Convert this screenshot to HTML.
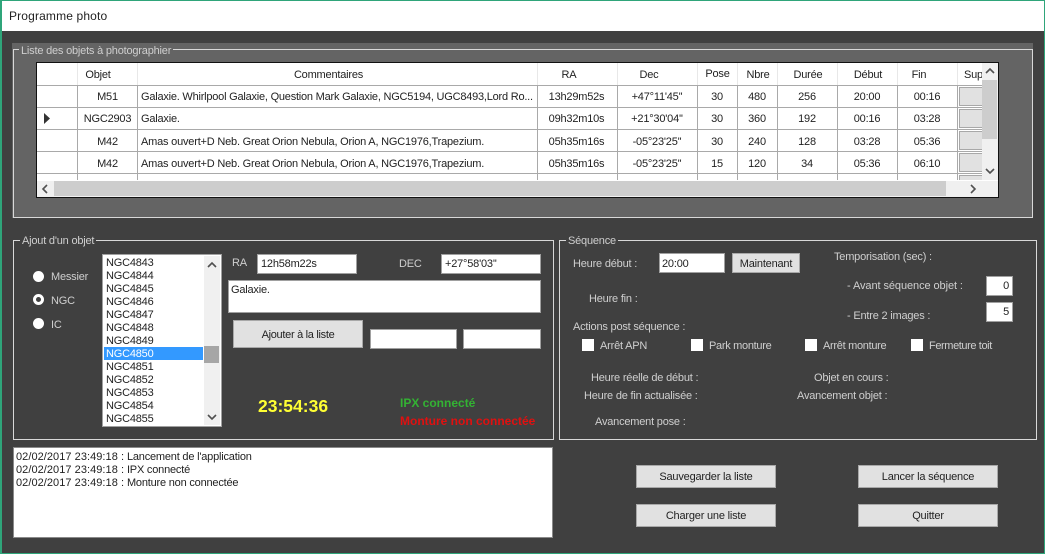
<!DOCTYPE html>
<html lang="fr"><head><meta charset="utf-8"><title>Programme photo</title>
<style>
html,body{margin:0;padding:0;width:1045px;height:554px;overflow:hidden;background:#404040}
body{position:relative;font:11px/14px "Liberation Sans",sans-serif;letter-spacing:-.2px;color:#222}
div,span{position:absolute;box-sizing:border-box;white-space:nowrap}
.t{height:14px;line-height:14px;margin-top:1px}
.l{color:#cfcfcf}
.c{text-align:center}
.b{background:#e1e1e1;border:1px solid #a8a8a8;text-align:center;color:#222}
.i{background:#fff;border:1px solid #a0a0a0;padding-left:3px;color:#222}
.g{border:1px solid #d8d8d8}
.lg{background:#404040;padding:0 2px;color:#cfcfcf;height:14px;line-height:14px}
.h{background:#a9a9a9}
.v{background:#a9a9a9;width:1px;top:63px;height:117px}
.hh{background:#e8e8e8;width:1px;top:63px;height:22px}
.cb{background:#fff;width:12px;height:12px;top:339px}
.rd{background:#fff;width:11px;height:11px;border-radius:50%;left:33px}
.it{left:106px;height:13px;line-height:13px;width:96px;color:#222;margin-top:2px}
b{font-weight:normal;letter-spacing:.05px}
</style></head><body>
<div style="left:0;top:0;width:1045px;height:554px;border:1px solid #2fa57a;border-width:1px 1px 1px 2px;z-index:9"></div>
<div style="left:0;top:0;width:1045px;height:31px;background:#fff"></div>
<div class="t" style="left:9px;top:8px;font-size:12px;letter-spacing:.15px;color:#222">Programme photo</div>

<div style="left:12px;top:43px;width:1021px;height:175px;background:#646464"></div>
<div style="left:13px;top:49px;width:1020px;height:169px;border:1px solid #d8d8d8"></div>
<div class="t" style="left:19px;top:43px;background:#646464;padding:0 2px;color:#cfcfcf">Liste des objets à photographier</div>

<div style="left:36px;top:62px;width:963px;height:136px;background:#fff;border:1px solid #111;overflow:hidden"></div>
<div class="h" style="left:37px;top:85px;width:945px;height:1px"></div>
<div class="h" style="left:37px;top:107px;width:945px;height:1px"></div>
<div class="h" style="left:37px;top:129px;width:945px;height:1px"></div>
<div class="h" style="left:37px;top:151px;width:945px;height:1px"></div>
<div class="h" style="left:37px;top:173px;width:945px;height:1px"></div>
<div class="hh" style="left:77px"></div>
<div class="hh" style="left:137px"></div>
<div class="hh" style="left:537px"></div>
<div class="hh" style="left:617px"></div>
<div class="hh" style="left:697px"></div>
<div class="hh" style="left:737px"></div>
<div class="hh" style="left:777px"></div>
<div class="hh" style="left:837px"></div>
<div class="hh" style="left:897px"></div>
<div class="hh" style="left:957px"></div>
<div class="v" style="left:77px;top:85px;height:95px"></div>
<div class="v" style="left:137px;top:85px;height:95px"></div>
<div class="v" style="left:537px;top:85px;height:95px"></div>
<div class="v" style="left:617px;top:85px;height:95px"></div>
<div class="v" style="left:697px;top:85px;height:95px"></div>
<div class="v" style="left:737px;top:85px;height:95px"></div>
<div class="v" style="left:777px;top:85px;height:95px"></div>
<div class="v" style="left:837px;top:85px;height:95px"></div>
<div class="v" style="left:897px;top:85px;height:95px"></div>
<div class="v" style="left:957px;top:85px;height:95px"></div>

<div class="t c" style="left:78px;top:67px;width:40px">Objet</div>
<div class="t c" style="left:138px;top:67px;width:381px">Commentaires</div>
<div class="t c" style="left:537px;top:67px;width:64px">RA</div>
<div class="t c" style="left:617px;top:67px;width:64px">Dec</div>
<div class="t c" style="left:697px;top:66px;width:41px">Pose</div>
<div class="t c" style="left:737px;top:67px;width:42px">Nbre</div>
<div class="t c" style="left:777px;top:67px;width:62px">Durée</div>
<div class="t c" style="left:837px;top:67px;width:62px">Début</div>
<div class="t c" style="left:897px;top:67px;width:44px">Fin</div>
<div class="t" style="left:964px;top:67px;width:18px;overflow:hidden">Sup</div>

<div class="t c" style="left:78px;top:89px;width:59px">M51</div>
<div class="t" style="left:141px;top:89px;letter-spacing:-.22px">Galaxie. Whirlpool Galaxie, Question Mark Galaxie, NGC5194, UGC8493,Lord Ro...</div>
<div class="t c" style="left:537px;top:89px;width:79px">13h29m52s</div>
<div class="t c" style="left:617px;top:89px;width:80px">+47°11'45''</div>
<div class="t c" style="left:697px;top:89px;width:40px">30</div>
<div class="t c" style="left:737px;top:89px;width:40px">480</div>
<div class="t c" style="left:777px;top:89px;width:60px">256</div>
<div class="t c" style="left:837px;top:89px;width:60px">20:00</div>
<div class="t c" style="left:897px;top:89px;width:60px">00:16</div>

<svg style="position:absolute;left:44px;top:113px" width="7" height="11"><path d="M0 0L6 5.5L0 11Z" fill="#333"/></svg>
<div class="t c" style="left:78px;top:111px;width:59px">NGC2903</div>
<div class="t" style="left:141px;top:111px">Galaxie.</div>
<div class="t c" style="left:537px;top:111px;width:79px">09h32m10s</div>
<div class="t c" style="left:617px;top:111px;width:80px">+21°30'04''</div>
<div class="t c" style="left:697px;top:111px;width:40px">30</div>
<div class="t c" style="left:737px;top:111px;width:40px">360</div>
<div class="t c" style="left:777px;top:111px;width:60px">192</div>
<div class="t c" style="left:837px;top:111px;width:60px">00:16</div>
<div class="t c" style="left:897px;top:111px;width:60px">03:28</div>

<div class="t c" style="left:78px;top:134px;width:59px">M42</div>
<div class="t" style="left:141px;top:134px">Amas ouvert+D Neb. Great Orion Nebula, Orion A, NGC1976,Trapezium.</div>
<div class="t c" style="left:537px;top:134px;width:79px">05h35m16s</div>
<div class="t c" style="left:617px;top:134px;width:80px">-05°23'25''</div>
<div class="t c" style="left:697px;top:134px;width:40px">30</div>
<div class="t c" style="left:737px;top:134px;width:40px">240</div>
<div class="t c" style="left:777px;top:134px;width:60px">128</div>
<div class="t c" style="left:837px;top:134px;width:60px">03:28</div>
<div class="t c" style="left:897px;top:134px;width:60px">05:36</div>

<div class="t c" style="left:78px;top:156px;width:59px">M42</div>
<div class="t" style="left:141px;top:156px">Amas ouvert+D Neb. Great Orion Nebula, Orion A, NGC1976,Trapezium.</div>
<div class="t c" style="left:537px;top:156px;width:79px">05h35m16s</div>
<div class="t c" style="left:617px;top:156px;width:80px">-05°23'25''</div>
<div class="t c" style="left:697px;top:156px;width:40px">15</div>
<div class="t c" style="left:737px;top:156px;width:40px">120</div>
<div class="t c" style="left:777px;top:156px;width:60px">34</div>
<div class="t c" style="left:837px;top:156px;width:60px">05:36</div>
<div class="t c" style="left:897px;top:156px;width:60px">06:10</div>

<div class="b" style="left:959px;top:87px;width:23px;height:19px;border-right:0"></div>
<div class="b" style="left:959px;top:109px;width:23px;height:19px;border-right:0"></div>
<div class="b" style="left:959px;top:131px;width:23px;height:19px;border-right:0"></div>
<div class="b" style="left:959px;top:153px;width:23px;height:19px;border-right:0"></div>
<div class="b" style="left:959px;top:175px;width:23px;height:5px;border-right:0;border-bottom:0"></div>

<div style="left:982px;top:63px;width:16px;height:117px;background:#f0f0f0"></div>
<div style="left:982px;top:80px;width:15px;height:59px;background:#cdcdcd"></div>
<svg style="position:absolute;left:984px;top:67px" width="12" height="8"><path d="M2 6L6 2L10 6" fill="none" stroke="#505050" stroke-width="1.6"/></svg>
<svg style="position:absolute;left:984px;top:167px" width="12" height="8"><path d="M2 2L6 6L10 2" fill="none" stroke="#505050" stroke-width="1.6"/></svg>
<div style="left:37px;top:181px;width:961px;height:16px;background:#f0f0f0"></div>
<div style="left:54px;top:181px;width:892px;height:15px;background:#cdcdcd"></div>
<svg style="position:absolute;left:41px;top:183px" width="8" height="12"><path d="M6 2L2 6L6 10" fill="none" stroke="#505050" stroke-width="1.6"/></svg>
<svg style="position:absolute;left:969px;top:183px" width="8" height="12"><path d="M2 2L6 6L2 10" fill="none" stroke="#505050" stroke-width="1.6"/></svg>

<div class="g" style="left:13px;top:240px;width:541px;height:200px"></div>
<div class="lg" style="left:20px;top:234px">Ajout d'un objet</div>

<div class="rd" style="top:271px"></div>
<div class="rd" style="top:294px;background:#404040;border:3px solid #fff"></div>
<div class="rd" style="top:318px"></div>
<div class="t l" style="left:51px;top:269px">Messier</div>
<div class="t l" style="left:51px;top:293px">NGC</div>
<div class="t l" style="left:51px;top:317px">IC</div>

<div style="left:102px;top:254px;width:120px;height:173px;background:#fff;border:1px solid #a0a0a0"></div>
<div style="left:104px;top:347px;width:99px;height:13px;background:#3399ff"></div>
<div class="it" style="top:255px">NGC4843</div>
<div class="it" style="top:268px">NGC4844</div>
<div class="it" style="top:281px">NGC4845</div>
<div class="it" style="top:294px">NGC4846</div>
<div class="it" style="top:307px">NGC4847</div>
<div class="it" style="top:320px">NGC4848</div>
<div class="it" style="top:333px">NGC4849</div>
<div class="it" style="top:346px;color:#fff">NGC4850</div>
<div class="it" style="top:359px">NGC4851</div>
<div class="it" style="top:372px">NGC4852</div>
<div class="it" style="top:385px">NGC4853</div>
<div class="it" style="top:398px">NGC4854</div>
<div class="it" style="top:411px">NGC4855</div>
<div style="left:204px;top:256px;width:16px;height:169px;background:#f0f0f0"></div>
<div style="left:204px;top:346px;width:15px;height:17px;background:#a6a6a6"></div>
<svg style="position:absolute;left:206px;top:261px" width="12" height="8"><path d="M2 6L6 2L10 6" fill="none" stroke="#505050" stroke-width="1.6"/></svg>
<svg style="position:absolute;left:206px;top:413px" width="12" height="8"><path d="M2 2L6 6L10 2" fill="none" stroke="#505050" stroke-width="1.6"/></svg>

<div class="t l" style="left:232px;top:255px">RA</div>
<div class="i t" style="left:257px;top:253px;width:100px;height:20px;line-height:18px">12h58m22s</div>
<div class="t l" style="left:399px;top:256px">DEC</div>
<div class="i t" style="left:441px;top:253px;width:100px;height:20px;line-height:18px">+27°58'03''</div>
<div class="i" style="left:228px;top:280px;width:313px;height:33px;padding-left:2px;line-height:18px">Galaxie.</div>
<div class="b" style="left:233px;top:320px;width:130px;height:28px;line-height:28px;letter-spacing:-.3px">Ajouter à la liste</div>
<div class="i" style="left:370px;top:329px;width:87px;height:20px"></div>
<div class="i" style="left:463px;top:329px;width:78px;height:20px"></div>

<div style="left:258px;top:396px;font:bold 17.5px/20px 'Liberation Sans',sans-serif;letter-spacing:0;color:#ffff33">23:54:36</div>
<div class="t" style="left:400px;top:395px;font-weight:bold;color:#33b233;font-size:12px;letter-spacing:0">IPX connecté</div>
<div class="t" style="left:400px;top:413px;font-weight:bold;color:#e01010;font-size:12px;letter-spacing:0">Monture non connectée</div>

<div class="g" style="left:559px;top:240px;width:478px;height:200px"></div>
<div class="lg" style="left:566px;top:234px">Séquence</div>
<div class="t l" style="left:573px;top:256px">Heure début :</div>
<div class="i t" style="left:659px;top:252px;width:66px;height:20px;line-height:20px;padding-left:2px">20:00</div>
<div class="b" style="left:732px;top:253px;width:68px;height:20px;line-height:20px">Maintenant</div>
<div class="t l" style="left:834px;top:249px">Temporisation (sec) :</div>
<div class="t l" style="left:847px;top:278px;letter-spacing:-.08px">- Avant séquence objet :</div>
<div class="i t" style="left:986px;top:275px;width:27px;height:20px;line-height:18px;text-align:right;padding:0 3px">0</div>
<div class="t l" style="left:847px;top:308px">- Entre 2 images :</div>
<div class="i t" style="left:986px;top:301px;width:27px;height:20px;line-height:18px;text-align:right;padding:0 3px">5</div>
<div class="t l" style="left:589px;top:291px">Heure fin :</div>
<div class="t l" style="left:573px;top:319px">Actions post séquence :</div>
<div class="cb" style="left:582px"></div><div class="t l" style="left:600px;top:338px">Arrêt APN</div>
<div class="cb" style="left:691px"></div><div class="t l" style="left:709px;top:338px;letter-spacing:-.3px">Park monture</div>
<div class="cb" style="left:805px"></div><div class="t l" style="left:823px;top:338px;letter-spacing:-.3px">Arrêt monture</div>
<div class="cb" style="left:911px"></div><div class="t l" style="left:929px;top:338px;letter-spacing:-.4px">Fermeture toit</div>
<div class="t l" style="left:591px;top:370px">Heure réelle de début :</div>
<div class="t l" style="left:584px;top:388px">Heure de fin actualisée :</div>
<div class="t l" style="left:595px;top:414px">Avancement pose :</div>
<div class="t l" style="left:814px;top:370px">Objet en cours :</div>
<div class="t l" style="left:797px;top:388px">Avancement objet :</div>

<div class="i" style="left:13px;top:447px;width:540px;height:91px;padding:3px 0 0 2px;line-height:13px;border-color:#8a8a8a;letter-spacing:-.2px"><b>02/02/2017 23:49:18 :</b> Lancement de l'application<br><b>02/02/2017 23:49:18 :</b> IPX connecté<br><b>02/02/2017 23:49:18 :</b> Monture non connectée</div>

<div class="b" style="left:636px;top:465px;width:140px;height:23px;line-height:23px">Sauvegarder la liste</div>
<div class="b" style="left:636px;top:504px;width:140px;height:23px;line-height:23px">Charger une liste</div>
<div class="b" style="left:858px;top:465px;width:140px;height:23px;line-height:23px">Lancer la séquence</div>
<div class="b" style="left:858px;top:504px;width:140px;height:23px;line-height:23px">Quitter</div>
</body></html>
